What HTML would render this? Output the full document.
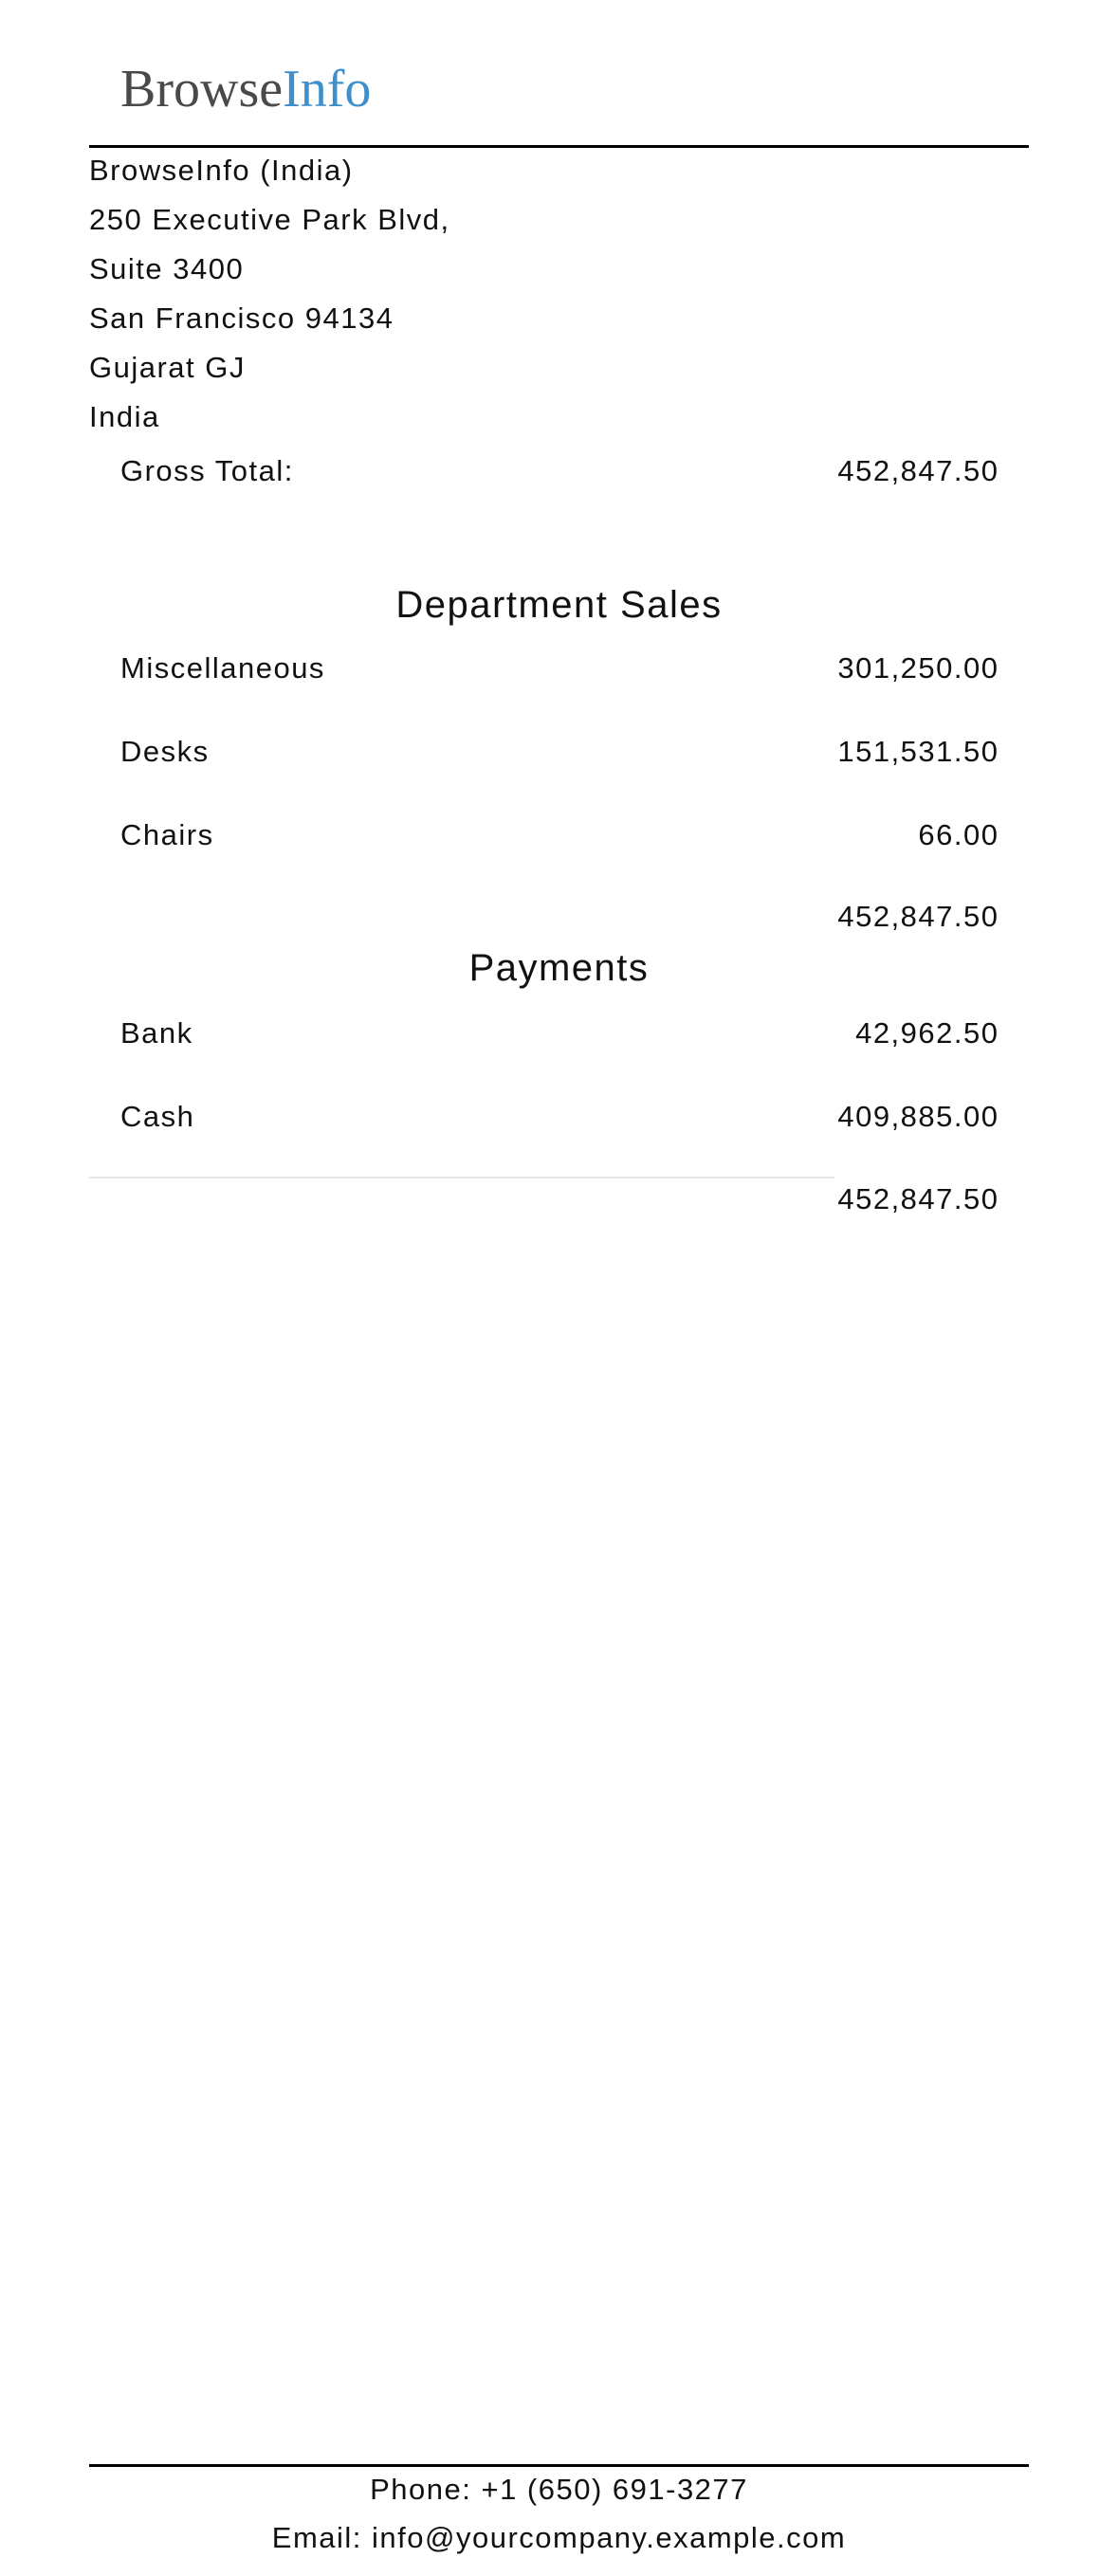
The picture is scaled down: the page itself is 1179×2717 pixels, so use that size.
<!DOCTYPE html>
<html><head><meta charset="utf-8"><style>
html,body{margin:0;padding:0;background:#fff;}
body{width:1179px;height:2717px;position:relative;overflow:hidden;font-family:"Liberation Sans",sans-serif;color:#111;letter-spacing:1.5px;}
.t{position:absolute;font-size:31px;line-height:31px;white-space:nowrap;}
.r{position:absolute;right:127px;font-size:31px;line-height:31px;white-space:nowrap;text-align:right;margin-right:-1.5px;}
.c{position:absolute;left:0;width:1179px;text-align:center;white-space:nowrap;}
.hr{position:absolute;left:94px;width:991px;height:3px;background:#000;}
</style></head><body>
<div style="position:absolute;left:127px;top:66px;font-family:'Liberation Serif',serif;font-size:56px;line-height:56px;color:#4a4a4a;letter-spacing:0;">Browse<span style="color:#3f8fcb">Info</span></div>
<div class="hr" style="top:153px"></div>
<div class="t" style="left:94px;top:164px">BrowseInfo (India)</div>
<div class="t" style="left:94px;top:216px">250 Executive Park Blvd,</div>
<div class="t" style="left:94px;top:268px">Suite 3400</div>
<div class="t" style="left:94px;top:320px">San Francisco 94134</div>
<div class="t" style="left:94px;top:372px">Gujarat GJ</div>
<div class="t" style="left:94px;top:424px">India</div>
<div class="t" style="left:127px;top:481px">Gross Total:</div>
<div class="r" style="top:481px">452,847.50</div>
<div class="c" style="top:618px;font-size:40px;line-height:40px;">Department Sales</div>
<div class="t" style="left:127px;top:689px">Miscellaneous</div>
<div class="r" style="top:689px">301,250.00</div>
<div class="t" style="left:127px;top:777px">Desks</div>
<div class="r" style="top:777px">151,531.50</div>
<div class="t" style="left:127px;top:865px">Chairs</div>
<div class="r" style="top:865px">66.00</div>
<div class="r" style="top:951px">452,847.50</div>
<div class="c" style="top:1001px;font-size:40px;line-height:40px;">Payments</div>
<div class="t" style="left:127px;top:1074px">Bank</div>
<div class="r" style="top:1074px">42,962.50</div>
<div class="t" style="left:127px;top:1162px">Cash</div>
<div class="r" style="top:1162px">409,885.00</div>
<div style="position:absolute;left:94px;top:1241px;width:786px;height:2px;background:#e6e6e6;"></div>
<div class="r" style="top:1249px">452,847.50</div>
<div class="hr" style="top:2599px"></div>
<div class="c" style="top:2610px;font-size:31px;line-height:31px;">Phone: +1 (650) 691-3277</div>
<div class="c" style="top:2661px;font-size:31px;line-height:31px;">Email: info@yourcompany.example.com</div>
</body></html>
